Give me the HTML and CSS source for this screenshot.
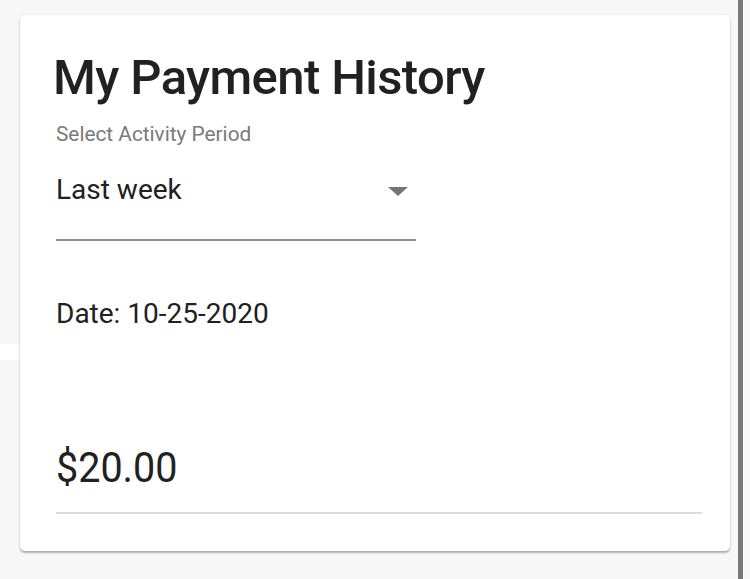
FILE: index.html
```html
<!DOCTYPE html>
<html>
<head>
<meta charset="utf-8">
<link rel="stylesheet" href="styles.css">
</head>
<body>
<div class="page">
  <div class="side-notch"></div>
  <main class="card">
    <h1 class="title">My Payment History</h1>
    <div class="field">
      <div class="field-label">Select Activity Period</div>
      <div class="select">
        <span class="select-value">Last week</span>
        <span class="select-arrow"></span>
      </div>
    </div>
    <div class="date">Date: 10-25-2020</div>
    <div class="amount">$20.00</div>
    <div class="divider"></div>
  </main>
  <div class="scrollbar"></div>
</div>
</body>
</html>
```

FILE: styles.css
```css
html, body {
  margin: 0;
  padding: 0;
  background: #f7f7f7;
  font-family: Roboto, "Liberation Sans", sans-serif;
}
.page {
  width: 750px;
  height: 579px;
  position: relative;
  overflow: hidden;
}
.side-notch {
  position: absolute;
  left: 0;
  top: 344px;
  width: 20px;
  height: 16px;
  background: #fff;
}
.card {
  position: absolute;
  left: 20px;
  top: 15px;
  width: 710px;
  height: 536px;
  box-sizing: border-box;
  background: #fff;
  border-radius: 5px;
  box-shadow: 0 2px 2px rgba(0,0,0,0.28), 0 0 3px rgba(0,0,0,0.08);
  padding: 35px 28px 0 36px;
}
.title {
  margin: 0 0 0 -3px;
  font-size: 49px;
  font-weight: 500;
  color: #212121;
  line-height: 56px;
  letter-spacing: -0.6px;
}
.field {
  margin-top: 16px;
  width: 360px;
}
.field-label {
  font-size: 20.8px;
  color: #7a7a7a;
  line-height: 24px;
}
.select {
  display: flex;
  align-items: center;
  justify-content: space-between;
  padding: 28px 0 33px;
  border-bottom: 2px solid #8e8e8e;
}
.select-value {
  font-size: 28px;
  line-height: 32px;
  color: #212121;
}
.select-arrow {
  width: 0;
  height: 0;
  border-left: 10px solid transparent;
  border-right: 10px solid transparent;
  border-top: 9px solid #757575;
  margin-right: 8px;
  margin-top: 3px;
}
.date {
  margin-top: 55px;
  font-size: 28px;
  color: #212121;
  line-height: 36px;
}
.amount {
  margin-top: 111px;
  font-size: 42px;
  color: #212121;
  line-height: 50px;
  transform: scaleX(0.94);
  transform-origin: left;
}
.divider {
  margin-top: 19px;
  height: 2px;
  background: #dcdcdc;
}
.scrollbar {
  position: absolute;
  right: 7px;
  top: 0;
  width: 5px;
  height: 579px;
  background: #777777;
}
```
